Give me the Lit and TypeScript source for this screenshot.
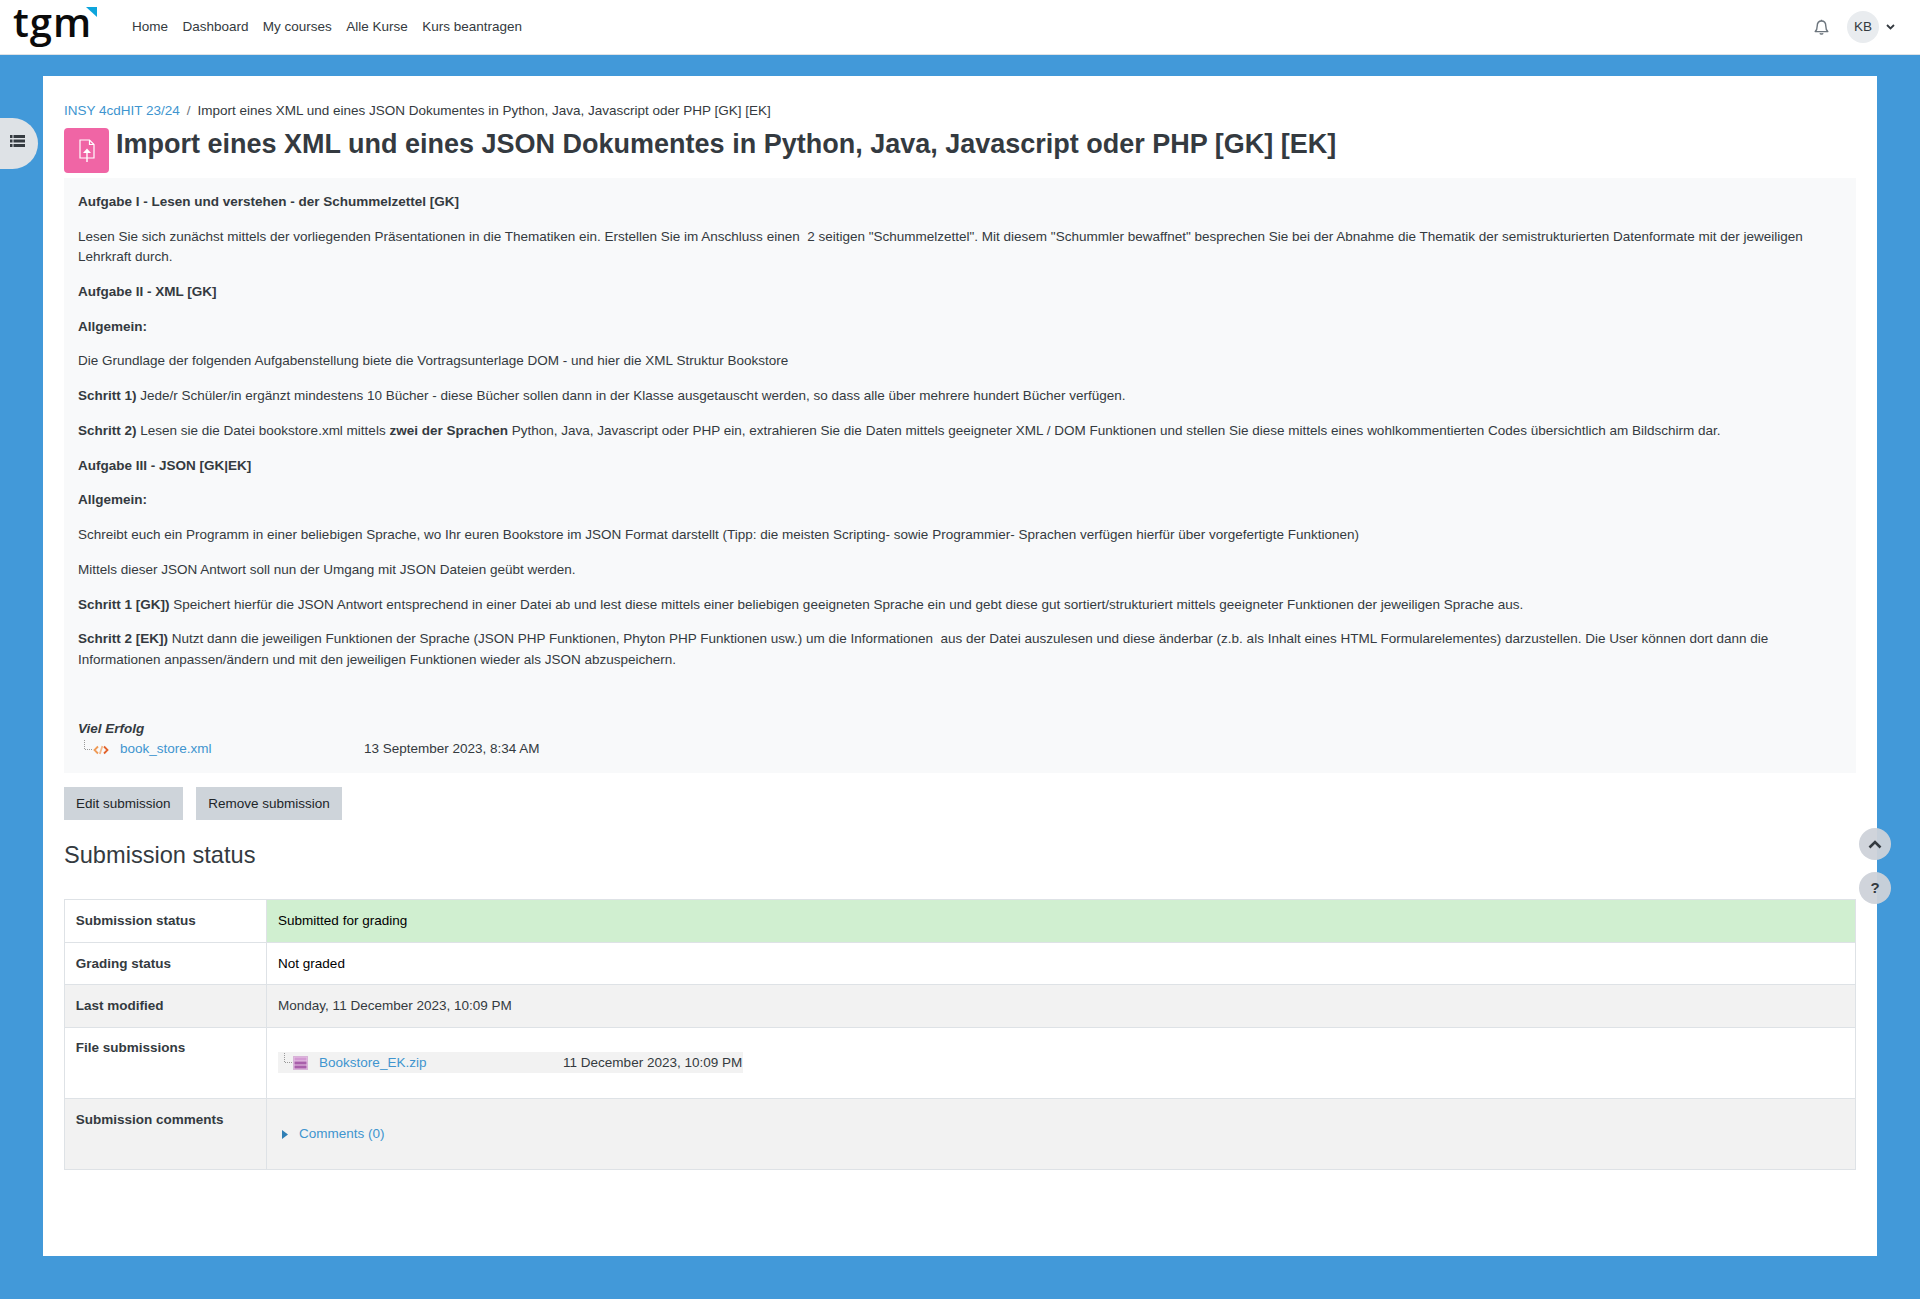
import { LitElement, html, css } from 'lit';
import { customElement } from 'lit/decorators.js';

const NAV = ['Home', 'Dashboard', 'My courses', 'Alle Kurse', 'Kurs beantragen'];
const TITLE = 'Import eines XML und eines JSON Dokumentes in Python, Java, Javascript oder PHP [GK] [EK]';

@customElement('app-root')
export class AppRoot extends LitElement {
  static styles = css`
    :host {
      display: block;
      min-height: 1299px;
      background: #4299d9;
      font-family: "Liberation Sans", Arial, sans-serif;
      font-size: 13.5px;
      line-height: 20.25px;
      color: #343a40;
      position: relative;
    }
    a { color: #4095cf; text-decoration: none; }
    p { margin: 0 0 14.5px; }

    .navbar {
      height: 54px;
      background: #fff;
      border-bottom: 1px solid #dee2e6;
      display: flex;
      align-items: center;
      padding: 0 25px 0 14px;
    }
    .logo {
      width: 83px;
      height: 54px;
      margin-right: 35px;
      position: relative;
      flex: none;
    }
    .logo span {
      position: absolute;
      left: -1px;
      top: 0;
      font-family: "Open Sans", sans-serif;
      font-weight: 600;
      font-size: 40px;
      line-height: 44px;
      letter-spacing: 1px;
      color: #0b0b0b;
    }
    .logo svg { position: absolute; left: 72px; top: 7px; }
    nav { display: flex; gap: 14.4px; flex: 1; }
    nav a { color: #343a40; }
    .user { display: flex; align-items: center; }
    .avatar {
      width: 32px;
      height: 32px;
      margin-left: 18px;
      margin-right: 7px;
      border-radius: 50%;
      background: #e9ecef;
      display: flex;
      align-items: center;
      justify-content: center;
    }

    .page { padding: 21px 43px 43px; }
    .box {
      background: #fff;
      height: 1180px;
      box-sizing: border-box;
      padding: 25px 21px 0;
    }
    .crumbs { display: flex; gap: 7px; height: 20px; margin-bottom: 7px; }
    .crumbs i { font-style: normal; color: #6c757d; }
    .head { display: flex; gap: 7px; height: 50px; }
    .activity {
      width: 45px;
      height: 45px;
      flex: none;
      background: #f065a5;
      border-radius: 4px;
      display: flex;
      align-items: center;
      justify-content: center;
    }
    h2 {
      margin: 0;
      font-size: 27px;
      line-height: 32px;
      font-weight: 700;
    }
    .intro {
      background: #f8f9fa;
      padding: 14px 14px 14px;
    }
    .tree {
      display: flex;
      align-items: center;
      height: 20px;
      padding-left: 6px;
    }
    .tree-mark { flex: none; display: block; margin-bottom: 9px; }
    .tree .name { width: 244px; margin-left: 11px; flex: none; }
    .actions { display: flex; gap: 13.6px; margin: 14px 0 0; }
    .btn {
      height: 33px;
      padding: 0 12px;
      background: #ced4da;
      display: flex;
      align-items: center;
      color: #212529;
    }
    h3 {
      margin: 21px 0 0;
      font-size: 23.6px;
      line-height: 28px;
      font-weight: 400;
    }
    table {
      width: 100%;
      margin-top: 29.5px;
      border-collapse: collapse;
      table-layout: fixed;
    }
    th, td {
      border: 1px solid #dee2e6;
      padding: 10.5px 10.8px;
      vertical-align: top;
      text-align: left;
    }
    td { padding-left: 11.5px; }
    tr:first-child th, tr:first-child td { padding-top: 11px; padding-bottom: 11px; }
    th { width: 179px; font-weight: 700; }
    .plain { color: #000; }
    .ok { background: #d0efd0; color: #000; }
    .grey th, .grey td { background: #f2f2f2; }
    .file-row {
      width: 465px;
      height: 21px;
      box-sizing: border-box;
      background: #f2f2f2;
      margin: 14.4px 0;
      white-space: nowrap;
    }
    .comments {
      display: flex;
      align-items: center;
      gap: 11px;
      margin: 14.4px 0 14.4px 4px;
      height: 20px;
    }

    .side {
      position: absolute;
      left: 0;
      top: 118px;
      width: 38px;
      height: 51px;
      background: #dee2e6;
      border-radius: 0 26px 26px 0;
      display: flex;
      align-items: center;
    }
    .side svg { margin: -5px 0 0 10px; }
    .round {
      position: absolute;
      left: 1859px;
      width: 32px;
      height: 32px;
      border-radius: 50%;
      background: rgba(205, 210, 217, .95);
      display: flex;
      align-items: center;
      justify-content: center;
      font-weight: 700;
      font-size: 15px;
      color: #343a40;
    }
  `;

  private fileTree(icon: unknown, name: string, date: string) {
    return html`
      <svg class="tree-mark" width="9" height="10" viewBox="0 0 9 10">
        <path d="M.5 0v9.500H9" fill="none" stroke="#999" stroke-dasharray="1 1"/>
      </svg>
      ${icon}
      <a class="name" href="#">${name}</a>
      <span>${date}</span>
    `;
  }

  render() {
    const xmlIcon = html`<svg width="16" height="10" viewBox="0 0 16 10" fill="none" stroke-width="1.8" style="margin-top:2px">
      <path d="M5 1.500 1.500 5 5 8.500" stroke="#ef9a55"/>
      <path d="M9.400 1 6.800 9" stroke="#f3b98a"/>
      <path d="M11 1.500 14.500 5 11 8.500" stroke="#e2622b"/>
    </svg>`;
    const zipIcon = html`<svg width="15" height="14" viewBox="0 0 15 14">
      <rect x=".5" y=".5" width="14" height="13" fill="#e6c6e4" stroke="#d8b3d8"/>
      <rect x="1.500" y="1.500" width="12" height="3" fill="#d39ad3"/>
      <rect x="1.500" y="5.500" width="12" height="3" fill="#a95fab"/>
      <rect x="1.500" y="9.500" width="12" height="3" fill="#a95fab"/>
    </svg>`;

    return html`
      <header class="navbar">
        <div class="logo">
          <span>tgm</span>
          <svg width="11" height="10" viewBox="0 0 11 10"><path d="M0 0h11v10z" fill="#0ea5dc"/></svg>
        </div>
        <nav>${NAV.map((n) => html`<a href="#">${n}</a>`)}</nav>
        <div class="user">
          <svg width="15" height="16" viewBox="0 0 15 16" fill="none" stroke="#6c757d" stroke-width="1.400">
            <path d="M1.200 12.600c1.500-1.300 2-2.600 2-5.600C3.200 4 5 2 7.500 2s4.300 2 4.300 5c0 3 .5 4.300 2 5.600z" stroke-linejoin="round"/>
            <path d="M6 14.200c.3 1 2.700 1 3 0M7.500 .8V2"/>
          </svg>
          <div class="avatar">KB</div>
          <svg width="9" height="6" viewBox="0 0 9 6" fill="none" stroke="#343a40" stroke-width="1.800"><path d="M1 1l3.500 3.500L8 1"/></svg>
        </div>
      </header>

      <div class="page">
        <main class="box">
          <div class="crumbs">
            <a href="#">INSY 4cdHIT 23/24</a><i>/</i><span>${TITLE}</span>
          </div>
          <div class="head">
            <div class="activity">
              <svg width="16" height="24" viewBox="0 0 16 24" fill="none" stroke="#fff" stroke-width="1.200">
                <path d="M1 1h9.500L15 5.500V19H1z"/>
                <path d="M10.500 1v4.500H15"/>
                <path d="M8 23V11" stroke-width="1.400"/>
                <path d="M8 9.500l4 4.500H4z" fill="#fff" stroke="none"/>
              </svg>
            </div>
            <h2>${TITLE}</h2>
          </div>

          <section class="intro">
            <p><b>Aufgabe I - Lesen und verstehen - der Schummelzettel [GK]</b></p>
            <p>Lesen Sie sich zunächst mittels der vorliegenden Präsentationen in die Thematiken ein. Erstellen Sie im Anschluss einen &nbsp;2 seitigen "Schummelzettel". Mit diesem "Schummler bewaffnet" besprechen Sie bei der Abnahme die Thematik der semistrukturierten Datenformate mit der jeweiligen Lehrkraft durch.</p>
            <p><b>Aufgabe II - XML [GK]</b></p>
            <p><b>Allgemein:</b></p>
            <p>Die Grundlage der folgenden Aufgabenstellung biete die Vortragsunterlage DOM - und hier die XML Struktur Bookstore</p>
            <p><b>Schritt 1)</b> Jede/r Schüler/in ergänzt mindestens 10 Bücher - diese Bücher sollen dann in der Klasse ausgetauscht werden, so dass alle über mehrere hundert Bücher verfügen.</p>
            <p><b>Schritt 2)</b> Lesen sie die Datei bookstore.xml mittels <b>zwei der Sprachen</b> Python, Java, Javascript oder PHP ein, extrahieren Sie die Daten mittels geeigneter XML / DOM Funktionen und stellen Sie diese mittels eines wohlkommentierten Codes übersichtlich am Bildschirm dar.</p>
            <p><b>Aufgabe III - JSON [GK|EK]</b></p>
            <p><b>Allgemein:</b></p>
            <p>Schreibt euch ein Programm in einer beliebigen Sprache, wo Ihr euren Bookstore im JSON Format darstellt (Tipp: die meisten Scripting- sowie Programmier- Sprachen verfügen hierfür über vorgefertigte Funktionen)</p>
            <p>Mittels dieser JSON Antwort soll nun der Umgang mit JSON Dateien geübt werden.</p>
            <p><b>Schritt 1 [GK])</b> Speichert hierfür die JSON Antwort entsprechend in einer Datei ab und lest diese mittels einer beliebigen geeigneten Sprache ein und gebt diese gut sortiert/strukturiert mittels geeigneter Funktionen der jeweiligen Sprache aus.</p>
            <p><b>Schritt 2 [EK])</b> Nutzt dann die jeweiligen Funktionen der Sprache (JSON PHP Funktionen, Phyton PHP Funktionen usw.) um die Informationen &nbsp;aus der Datei auszulesen und diese änderbar (z.b. als Inhalt eines HTML Formularelementes) darzustellen. Die User können dort dann die Informationen anpassen/ändern und mit den jeweiligen Funktionen wieder als JSON abzuspeichern.</p>
            <p>&nbsp;</p>
            <div><b><em>Viel Erfolg</em></b></div>
            <div class="tree">${this.fileTree(xmlIcon, 'book_store.xml', '13 September 2023, 8:34 AM')}</div>
          </section>

          <div class="actions">
            <a class="btn" href="#">Edit submission</a>
            <a class="btn" href="#">Remove submission</a>
          </div>

          <h3>Submission status</h3>

          <table>
            <tr><th>Submission status</th><td class="ok">Submitted for grading</td></tr>
            <tr><th>Grading status</th><td class="plain">Not graded</td></tr>
            <tr class="grey"><th>Last modified</th><td>Monday, 11 December 2023, 10:09 PM</td></tr>
            <tr>
              <th>File submissions</th>
              <td><div class="tree file-row">${this.fileTree(zipIcon, 'Bookstore_EK.zip', '11 December 2023, 10:09 PM')}</div></td>
            </tr>
            <tr class="grey">
              <th>Submission comments</th>
              <td>
                <div class="comments">
                  <svg width="6" height="9" viewBox="0 0 6 9"><path d="M0 0l6 4.500L0 9z" fill="#2f7fb5"/></svg>
                  <a href="#">Comments (0)</a>
                </div>
              </td>
            </tr>
          </table>
        </main>
      </div>

      <div class="side">
        <svg width="15" height="12" viewBox="0 0 15 12" fill="#343a40">
          <path d="M0 0h2.500v3H0zM3.500 0H15v3H3.500zM0 4.500h2.500v3H0zM3.500 4.500H15v3H3.500zM0 9h2.500v3H0zM3.500 9H15v3H3.500z"/>
        </svg>
      </div>
      <div class="round" style="top:828px">
        <svg width="14" height="9" viewBox="0 0 14 9" fill="none" stroke="#343a40" stroke-width="2.600"><path d="M1.500 7.500 7 2l5.500 5.500"/></svg>
      </div>
      <div class="round" style="top:872px">?</div>
    `;
  }
}
